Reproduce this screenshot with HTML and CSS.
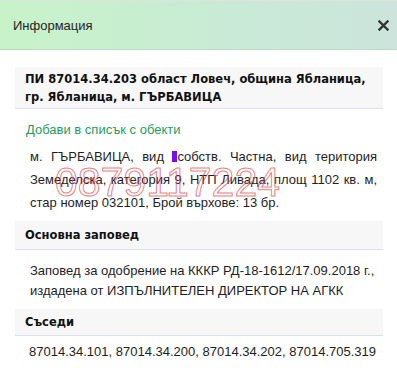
FILE: index.html
```html
<!DOCTYPE html>
<html lang="bg">
<head>
<meta charset="utf-8">
<title>Информация</title>
<link rel="stylesheet" href="styles.css">
</head>
<body>
<div class="strip"></div>
<header class="header">
  <span class="title">Информация</span>
  <svg class="close" width="11" height="11" viewBox="0 0 11 11" aria-label="Затвори"><path d="M1.5 1.5 L9.5 9.5 M9.5 1.5 L1.5 9.5" stroke="#333" stroke-width="2.4" stroke-linecap="square"/></svg>
</header>
<main class="content">
  <div class="section-title first">ПИ 87014.34.203 област Ловеч, община Ябланица,<br>гр. Ябланица, м. ГЪРБАВИЦА</div>
  <a class="add-link" href="#">Добави в списък с обекти</a>
  <div class="desc-wrap">
    <p class="desc">м. ГЪРБАВИЦА, вид <span class="marker"></span>собств. Частна, вид територия Земеделска, категория 9, НТП Ливада, площ 1102 кв. м, стар номер 032101, Брой върхове: 13 бр.</p>
    <span class="watermark">0879117224</span>
  </div>
  <div class="section-title">Основна заповед</div>
  <p class="text order">Заповед за одобрение на КККР РД-18-1612/17.09.2018 г., издадена от ИЗПЪЛНИТЕЛЕН ДИРЕКТОР НА АГКК</p>
  <div class="section-title small">Съседи</div>
  <p class="text neighbors">87014.34.101, 87014.34.200, 87014.34.202, 87014.705.319</p>
</main>
</body>
</html>
```
FILE: styles.css
```css
html, body {
  margin: 0;
  padding: 0;
  background: #fff;
}
body {
  font-family: "Liberation Sans", Arial, sans-serif;
  font-size: 13px;
  color: #1e1e1e;
  width: 397px;
  height: 388px;
  overflow: hidden;
}
.strip {
  height: 1px;
  background: #e2e2dc;
}
.header {
  height: 48px;
  display: flex;
  align-items: center;
  justify-content: space-between;
  padding: 0 8px 0 13px;
  background: linear-gradient(to right, #c7f3c9, #c9ead6 60%, #cce4dc);
  border-bottom: 1px solid #b9dcc6;
}
.title {
  font-size: 13px;
  color: #1f1f1f;
}
.close {
  display: block;
}
.content {
  padding: 17px 14px 0 15px;
}
.section-title {
  background: #f7f7f8;
  border-bottom: 1px solid #dde2e8;
  font-family: "DejaVu Sans", Verdana, sans-serif;
  font-size: 11.5px;
  font-weight: bold;
  line-height: 18px;
  padding: 5px 4px 5px 10px;
  color: #111;
  white-space: nowrap;
}
.section-title.first {
  padding: 3px 4px 2px 10px;
}
.section-title.small {
  padding: 4px 4px 4px 10px;
}
.add-link {
  display: block;
  margin: 12px 0 0 11px;
  line-height: 18px;
  color: #1f9d5e;
  text-decoration: none;
}
.desc-wrap {
  position: relative;
  margin: 6px 6px 7px 15px;
}
.desc {
  margin: 0;
  line-height: 23px;
  text-align: justify;
}
.marker {
  display: inline-block;
  width: 5px;
  height: 11px;
  vertical-align: -1px;
  background: #7b0cf0;
}
.watermark {
  position: absolute;
  left: 25px;
  top: 14px;
  font-size: 41px;
  line-height: 46px;
  color: transparent;
  -webkit-text-stroke: 1px rgba(222, 70, 70, 0.7);
  pointer-events: none;
  white-space: nowrap;
}
.text {
  margin: 0 0 0 15px;
  line-height: 20px;
}
.order {
  margin-top: 11px;
  margin-bottom: 8px;
}
.neighbors {
  margin-top: 6px;
  margin-left: 14px;
}
```
